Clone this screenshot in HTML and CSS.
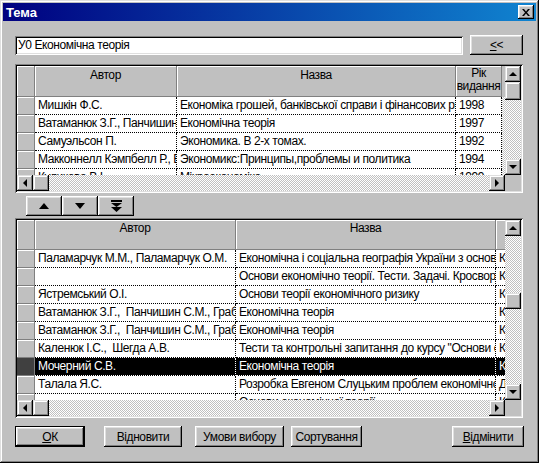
FILE: index.html
```html
<!DOCTYPE html>
<html lang="uk">
<head>
    <meta charset="UTF-8">
    <title>Тема</title>
    <link rel="stylesheet" href="styles.css">
</head>
<body>
    <div class="window">
        <div class="titlebar">
            <span class="title">Тема</span>
            <div class="close">
                <svg width="8" height="7" viewBox="0 0 8 7"><path d="M0 0h2l2 2.5 2-2.5h2l-3 3.5 3 3.5h-2l-2-2.5-2 2.5h-2l3-3.5z" fill="#000"/></svg>
            </div>
        </div>
        <div class="content">
            <div class="search-row">
                <div class="edit">У0 Економічна теорія</div>
                <div class="btn btn-back"><u>&lt;</u>&lt;</div>
            </div>

            <!-- верхня таблиця -->
            <div class="grid g1">
                <div class="grid-main">
                    <div class="cells">
                        <div class="hrow">
                            <div class="hcell c-ind"></div>
                            <div class="hcell c-author">Автор</div>
                            <div class="hcell c-title">Назва</div>
                            <div class="hcell c-year">Рік<br>видання</div>
                        </div>
                        <div class="row">
                            <div class="ind"></div>
                            <div class="cell c-author">Мишкін Ф.С.</div>
                            <div class="cell c-title">Економіка грошей, банківської справи і фінансових ринків</div>
                            <div class="cell c-year">1998</div>
                        </div>
                        <div class="row">
                            <div class="ind"></div>
                            <div class="cell c-author">Ватаманюк З.Г., Панчишин С.М.</div>
                            <div class="cell c-title">Економічна теорія</div>
                            <div class="cell c-year">1997</div>
                        </div>
                        <div class="row">
                            <div class="ind"></div>
                            <div class="cell c-author">Самуэльсон П.</div>
                            <div class="cell c-title">Экономика. В 2-х томах.</div>
                            <div class="cell c-year">1992</div>
                        </div>
                        <div class="row">
                            <div class="ind"></div>
                            <div class="cell c-author">Макконнелл Кэмпбелл Р., Брю Стэнли Л.</div>
                            <div class="cell c-title">Экономикс:Принципы,проблемы и политика</div>
                            <div class="cell c-year">1994</div>
                        </div>
                        <div class="row">
                            <div class="ind"></div>
                            <div class="cell c-author">Куликова В.І.</div>
                            <div class="cell c-title">Мікроекономіка</div>
                            <div class="cell c-year">1999</div>
                        </div>
                    </div>
                    <div class="vscroll">
                        <div class="sbtn"><span class="tri up"></span></div>
                        <div class="thumb t1"></div>
                        <div class="track"></div>
                        <div class="sbtn"><span class="tri down"></span></div>
                    </div>
                </div>
                <div class="hscroll-row">
                    <div class="hscroll">
                        <div class="sbtn"><span class="tri left"></span></div>
                        <div class="thumb"></div>
                        <div class="track"></div>
                        <div class="sbtn"><span class="tri right"></span></div>
                    </div>
                    <div class="corner"></div>
                </div>
            </div>

            <div class="nav">
                <div class="btn nav-btn"><span class="tri big-up"></span></div>
                <div class="btn nav-btn"><span class="tri big-down"></span></div>
                <div class="btn nav-btn">
                    <svg width="11" height="12" viewBox="0 0 11 12"><rect x="0" y="0" width="11" height="2" fill="#000"/><path d="M0 3h11l-5.5 4z M0 7h11l-5.5 5z" fill="#000"/></svg>
                </div>
            </div>

            <!-- нижня таблиця -->
            <div class="grid g2">
                <div class="grid-main">
                    <div class="cells">
                        <div class="hrow">
                            <div class="hcell c-ind"></div>
                            <div class="hcell c-author">Автор</div>
                            <div class="hcell c-title">Назва</div>
                            <div class="hcell c-city"></div>
                        </div>
                        <div class="row">
                            <div class="ind"></div>
                            <div class="cell c-author">Паламарчук М.М., Паламарчук О.М.</div>
                            <div class="cell c-title">Економічна і соціальна географія України з основами</div>
                            <div class="cell c-city">К</div>
                        </div>
                        <div class="row">
                            <div class="ind"></div>
                            <div class="cell c-author"></div>
                            <div class="cell c-title">Основи економічно теорії. Тести. Задачі. Кросворди</div>
                            <div class="cell c-city">К</div>
                        </div>
                        <div class="row">
                            <div class="ind"></div>
                            <div class="cell c-author">Ястремський О.І.</div>
                            <div class="cell c-title">Основи теорії економічного ризику</div>
                            <div class="cell c-city">К</div>
                        </div>
                        <div class="row">
                            <div class="ind"></div>
                            <div class="cell c-author">Ватаманюк З.Г.,&nbsp; Панчишин С.М., Грабовецький Б.Є.</div>
                            <div class="cell c-title">Економічна теорія</div>
                            <div class="cell c-city">К</div>
                        </div>
                        <div class="row">
                            <div class="ind"></div>
                            <div class="cell c-author">Ватаманюк З.Г.,&nbsp; Панчишин С.М., Грабовецький Б.Є.</div>
                            <div class="cell c-title">Економічна теорія</div>
                            <div class="cell c-city">К</div>
                        </div>
                        <div class="row">
                            <div class="ind"></div>
                            <div class="cell c-author">Каленюк І.С.,&nbsp; Шегда А.В.</div>
                            <div class="cell c-title">Тести та контрольні запитання до курсу "Основи економічної теорії"</div>
                            <div class="cell c-city">К</div>
                        </div>
                        <div class="row selected">
                            <div class="ind"></div>
                            <div class="cell c-author">Мочерний С.В.</div>
                            <div class="cell c-title">Економічна теорія</div>
                            <div class="cell c-city">К</div>
                        </div>
                        <div class="row">
                            <div class="ind"></div>
                            <div class="cell c-author">Талала Я.С.</div>
                            <div class="cell c-title">Розробка Евгеном Слуцьким проблем економічної теорії</div>
                            <div class="cell c-city">Д</div>
                        </div>
                        <div class="row">
                            <div class="ind"></div>
                            <div class="cell c-author"></div>
                            <div class="cell c-title">Основи економічної теорії</div>
                            <div class="cell c-city">К</div>
                        </div>
                    </div>
                    <div class="vscroll">
                        <div class="sbtn"><span class="tri up"></span></div>
                        <div class="track t-a"></div>
                        <div class="thumb"></div>
                        <div class="track"></div>
                        <div class="sbtn"><span class="tri down"></span></div>
                    </div>
                </div>
                <div class="hscroll-row">
                    <div class="hscroll">
                        <div class="sbtn"><span class="tri left"></span></div>
                        <div class="thumb"></div>
                        <div class="track"></div>
                        <div class="sbtn"><span class="tri right"></span></div>
                    </div>
                    <div class="corner"></div>
                </div>
            </div>

            <div class="footer">
                <div class="btn btn-default b-ok"><u>О</u>К</div>
                <div class="btn b-restore">Відновити</div>
                <div class="btn b-cond">Умови вибору</div>
                <div class="btn b-sort">Сортування</div>
                <div class="btn b-cancel"><u>В</u>ідмінити</div>
            </div>
        </div>
    </div>
</body>
</html>
```

FILE: styles.css
```css
body{
    margin:0;
    background:#c0c0c0;
    font-family: "Liberation Sans", Arial, sans-serif;
    font-size: 12px;
    letter-spacing: -0.4px;
    color:#000;
}
.window{
    width:539px;
    height:463px;
    box-sizing: border-box;
    padding:3px;
    background:#c0c0c0;
    box-shadow: inset -1px -1px #000, inset 1px 1px #dfdfdf, inset -2px -2px #808080, inset 2px 2px #fff;
}
.titlebar{
    height:18px;
    display:flex;
    align-items:center;
    justify-content:space-between;
    padding:0 2px 0 3px;
    background: linear-gradient(to right, #000080, #1084d0);
}
.title{
    color:#fff;
    font-weight:bold;
    font-size:13px;
    letter-spacing:0;
}
.close{
    width:16px;
    height:14px;
    display:flex;
    align-items:center;
    justify-content:center;
    background:#c0c0c0;
    box-shadow: inset -1px -1px #000, inset 1px 1px #fff, inset -2px -2px #808080, inset 2px 2px #dfdfdf;
}
.content{
    padding:14px 0 0 12px;
}

/* кнопки */
.btn{
    box-sizing:border-box;
    display:flex;
    align-items:center;
    justify-content:center;
    background:#c0c0c0;
    box-shadow: inset -1px -1px #000, inset 1px 1px #fff, inset -2px -2px #808080, inset 2px 2px #dfdfdf;
    white-space:nowrap;
}
.btn-default{
    border:1px solid #000;
}

.search-row{
    display:flex;
    height:20px;
}
.edit{
    box-sizing:border-box;
    width:448px;
    height:19px;
    margin-top:1px;
    padding:2px 0 0 3px;
    line-height:14px;
    background:#fff;
    box-shadow: inset 1px 1px #808080, inset -1px -1px #fff, inset 2px 2px #000, inset -2px -2px #dfdfdf;
}
.btn-back{
    width:53px;
    height:20px;
    margin-left:7px;
}

/* таблиці */
.grid{
    box-sizing:border-box;
    width:508px;
    padding:2px;
    box-shadow: inset 1px 1px #808080, inset -1px -1px #fff, inset 2px 2px #000, inset -2px -2px #dfdfdf;
}
.g1{
    height:129px;
    margin-top:9px;
}
.g2{
    height:200px;
    margin-top:2px;
}
.grid-main{
    display:flex;
}
.g1 .grid-main{ height:109px; }
.g2 .grid-main{ height:180px; }
.cells{
    width:488px;
    overflow:hidden;
    background: repeating-conic-gradient(#c0c0c0 0 25%, #fff 0 50%) 0 0/2px 2px;
}
.hrow{
    display:flex;
    background:#c0c0c0;
}
.g1 .hrow{ height:31px; }
.g2 .hrow{ height:30px; }
.hcell{
    box-sizing:border-box;
    height:100%;
    text-align:center;
    padding-top:2px;
    line-height:14px;
    border-right:1px solid #808080;
    border-bottom:1px solid #808080;
    box-shadow: inset 1px 1px #fff;
    white-space:nowrap;
    overflow:hidden;
}
.g2 .hcell{ padding-top:1px; }
.g1 .hcell.c-year{
    padding-top:1px;
    line-height:13px;
}
.row{
    display:flex;
    height:18px;
    background:#fff;
}
.ind{
    box-sizing:border-box;
    width:18px;
    flex:none;
    background:#c0c0c0;
    border-right:1px solid #808080;
    border-bottom:1px solid #808080;
    box-shadow: inset 1px 1px #fff;
}
.cell{
    box-sizing:border-box;
    flex:none;
    padding-left:3px;
    line-height:17px;
    white-space:nowrap;
    overflow:hidden;
    border-right:1px dotted #000;
    border-bottom:1px dotted #000;
}
.c-ind{ width:18px; flex:none; }
.g1 .c-author{ width:142px; flex:none; }
.g1 .c-title{ width:279px; flex:none; }
.g1 .c-year{ width:46px; flex:none; }
.g1 .row{ width:485px; }
.g2 .c-author{ width:201px; flex:none; }
.g2 .c-title{ width:260px; flex:none; }
.g2 .c-city{ width:9px; flex:none; border-right:0; }
.row.selected{
    background:#000;
    color:#fff;
}
.row.selected .cell{
    border-color:#fff;
}
.row.selected .ind{
    background:#404040;
    box-shadow:none;
}

/* смуги прокрутки */
.vscroll{
    width:16px;
    display:flex;
    flex-direction:column;
    background: repeating-conic-gradient(#c0c0c0 0 25%, #fff 0 50%) 0 0/2px 2px;
}
.hscroll-row{
    display:flex;
    height:16px;
}
.hscroll{
    width:488px;
    display:flex;
    background: repeating-conic-gradient(#c0c0c0 0 25%, #fff 0 50%) 0 0/2px 2px;
}
.corner{
    width:16px;
    background:#c0c0c0;
}
.sbtn, .thumb{
    box-sizing:border-box;
    width:16px;
    height:16px;
    flex:none;
    display:flex;
    align-items:center;
    justify-content:center;
    background:#c0c0c0;
    box-shadow: inset -1px -1px #000, inset 1px 1px #dfdfdf, inset -2px -2px #808080, inset 2px 2px #fff;
}
.thumb.t1{ height:18px; }
.track{ flex:1; }
.track.t-a{ flex:none; height:57px; }

.tri{
    width:0;
    height:0;
    border-style:solid;
    border-color:transparent;
}
.tri.up{ border-width:0 4px 4px 4px; border-bottom-color:#000; margin-top:-1px; }
.tri.down{ border-width:4px 4px 0 4px; border-top-color:#000; }
.tri.left{ border-width:4px 4px 4px 0; border-right-color:#000; }
.tri.right{ border-width:4px 0 4px 4px; border-left-color:#000; }
.tri.big-up{ border-width:0 5.5px 6px 5.5px; border-bottom-color:#000; }
.tri.big-down{ border-width:6px 5.5px 0 5.5px; border-top-color:#000; }

.nav{
    display:flex;
    margin:3px 0 0 11px;
}
.nav-btn{
    width:36px;
    height:20px;
}

.footer{
    display:flex;
    margin-top:8px;
    height:21px;
}
.footer .btn{ height:21px; }
.b-ok{ width:70px; }
.b-restore{ width:78px; margin-left:19px; }
.b-cond{ width:89px; margin-left:13px; }
.b-sort{ width:71px; margin-left:7px; }
.b-cancel{ width:72px; margin-left:90px; }
```
